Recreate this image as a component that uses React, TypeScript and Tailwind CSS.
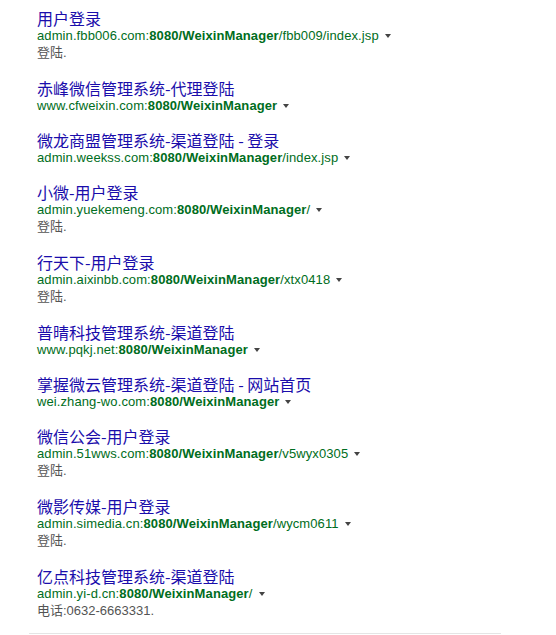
import React from "react";

type Result = {
  title: string;
  host: string;
  path?: string;
  snippet?: string;
};

const results: Result[] = [
  { title: "用户登录", host: "admin.fbb006.com", path: "/fbb009/index.jsp", snippet: "登陆." },
  { title: "赤峰微信管理系统-代理登陆", host: "www.cfweixin.com" },
  { title: "微龙商盟管理系统-渠道登陆 - 登录", host: "admin.weekss.com", path: "/index.jsp" },
  { title: "小微-用户登录", host: "admin.yuekemeng.com", path: "/", snippet: "登陆." },
  { title: "行天下-用户登录", host: "admin.aixinbb.com", path: "/xtx0418", snippet: "登陆." },
  { title: "普晴科技管理系统-渠道登陆", host: "www.pqkj.net" },
  { title: "掌握微云管理系统-渠道登陆 - 网站首页", host: "wei.zhang-wo.com" },
  { title: "微信公会-用户登录", host: "admin.51wws.com", path: "/v5wyx0305", snippet: "登陆." },
  { title: "微影传媒-用户登录", host: "admin.simedia.cn", path: "/wycm0611", snippet: "登陆." },
  { title: "亿点科技管理系统-渠道登陆", host: "admin.yi-d.cn", path: "/", snippet: "电话:0632-6663331." },
];

const sans = "font-['Liberation_Sans','Noto_Sans_CJK_SC',sans-serif]";

function Item({ r }: { r: Result }) {
  return (
    <li className="mb-[16px]">
      <a className="block text-[16px] leading-[20px] text-[#1a0dab] font-['Noto_Sans_CJK_SC',sans-serif]">
        {r.title}
      </a>
      <div className={`flex items-center text-[13px] leading-[16px] tracking-[0.1px] text-[#006d21] ${sans}`}>
        <cite className="not-italic">
          {r.host}:<b>8080/WeixinManager</b>
          {r.path}
        </cite>
        <span className="ml-[6px] inline-block w-0 h-0 border-l-[3px] border-r-[3px] border-t-[4px] border-l-transparent border-r-transparent border-t-[#444]" />
      </div>
      {r.snippet && (
        <p className={`text-[13px] leading-[18px] text-[#545454] ${sans}`}>{r.snippet}</p>
      )}
    </li>
  );
}

export default function App() {
  return (
    <div className="w-[556px] h-[635px] bg-white overflow-hidden">
      <div className="pt-[8px] pl-[37px]">
        <ul>
          {results.map((r, i) => (
            <Item key={i} r={r} />
          ))}
        </ul>
      </div>
      <div className="ml-[29px] w-[472px] -mt-[3px] border-t border-[#e5e5e5]" />
    </div>
  );
}
